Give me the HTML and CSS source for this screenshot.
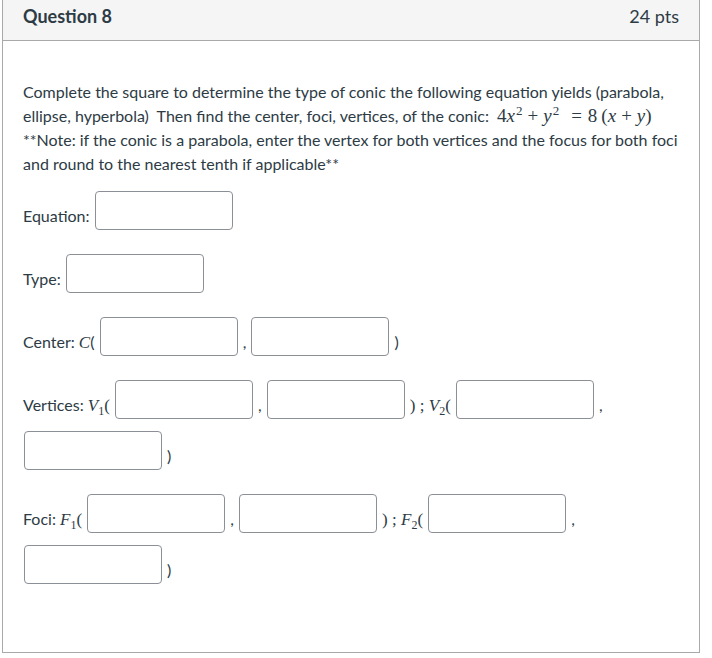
FILE: index.html
```html
<!DOCTYPE html>
<html>
<head>
<meta charset="utf-8">
<link rel="stylesheet" href="styles.css">
</head>
<body>
<div class="question">
  <div class="q-header">
    <span class="q-title">Question 8</span>
    <span class="q-points">24 pts</span>
  </div>
  <div class="q-body">
    <p class="q-text">Complete the square to determine the type of conic the following equation yields (parabola, ellipse, hyperbola)&nbsp; Then find the center, foci, vertices, of the conic: <span class="math eq">4<i>x</i><sup>2</sup><span class="op">+</span><i>y</i><sup>2</sup><span class="op wide">=</span>8<span class="thin"></span>(<i>x</i><span class="op">+</span><i>y</i>)</span> **Note: if the conic is a parabola, enter the vertex for both vertices and the focus for both foci and round to the nearest tenth if applicable**</p>
    <p class="row">Equation: <input class="ans" type="text"></p>
    <p class="row">Type: <input class="ans" type="text"></p>
    <p class="row">Center: <span class="math"><i>C</i></span>( <input class="ans" type="text"> , <input class="ans" type="text"> )</p>
    <p class="row">Vertices: <span class="math"><i>V</i><sub>1</sub>(</span> <input class="ans" type="text"> , <input class="ans" type="text"> <span class="math">) ; <i>V</i><sub>2</sub>(</span> <input class="ans" type="text"> , <input class="ans" type="text"> )</p>
    <p class="row">Foci: <span class="math"><i>F</i><sub>1</sub>(</span> <input class="ans" type="text"> , <input class="ans" type="text"> <span class="math">) ; <i>F</i><sub>2</sub>(</span> <input class="ans" type="text"> , <input class="ans" type="text"> )</p>
  </div>
</div>
</body>
</html>
```
FILE: styles.css
```css
html, body {
  margin: 0;
  padding: 0;
  background: #fff;
}
body {
  font-family: Lato, "Liberation Sans", sans-serif;
  color: #2d3b45;
}
.question {
  margin-left: 2px;
  width: 698px;
  box-sizing: border-box;
  border: 1px solid #a9a9a9;
  border-top: none;
}
.q-header {
  height: 41px;
  box-sizing: border-box;
  background: #f5f5f5;
  border-bottom: 1px solid #a9a9a9;
  display: flex;
  justify-content: space-between;
  align-items: flex-start;
  padding: 6px 20px 0 20px;
  font-size: 18px;
  line-height: 21.6px;
}
.q-title {
  font-weight: 700;
}
.q-points {
  font-weight: 400;
}
.q-body {
  padding: 39px 20px 62px 20px;
  font-size: 16px;
  line-height: 24px;
}
.q-text {
  margin: 0 0 9px 0;
}
.row {
  margin: 0 0 12px 0;
}
.row:last-child {
  margin-bottom: 0;
}
.math {
  font-family: "Liberation Serif", "DejaVu Serif", serif;
  font-size: 17px;
}
.math sup, .math sub {
  font-size: 12px;
  line-height: 0;
}
.eq {
  font-size: 19px;
  line-height: 1;
  margin-left: 4px;
}
.eq sup {
  font-size: 13px;
  vertical-align: 7px;
  margin-left: 1px;
}
.eq .op {
  margin: 0 5px;
}
.eq .op.wide {
  margin: 0 6px 0 12px;
}
.eq .thin {
  display: inline-block;
  width: 4px;
}
.ans {
  display: inline-block;
  box-sizing: border-box;
  width: 138px;
  height: 39px;
  margin: 6px 1px;
  padding: 0 6px;
  border: 1px solid #8b9096;
  border-radius: 4px;
  background: #fff;
  font-family: Lato, sans-serif;
  font-size: 16px;
  vertical-align: 5px;
  outline: none;
}
```
